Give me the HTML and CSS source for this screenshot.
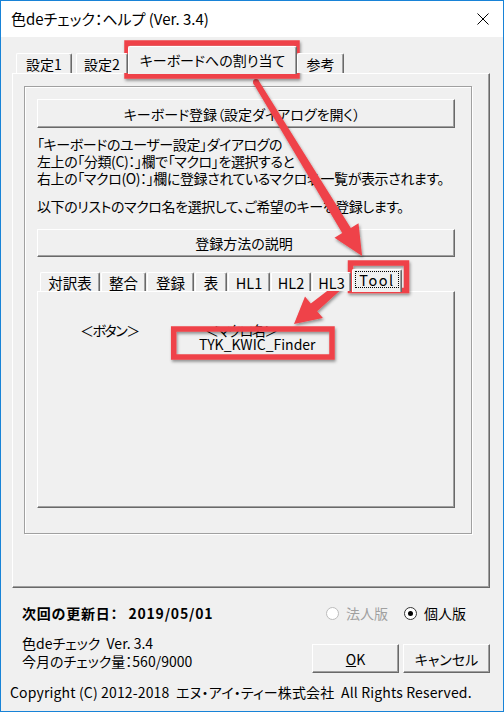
FILE: index.html
```html
<!DOCTYPE html>
<html lang="ja">
<head>
  <meta charset="UTF-8" />
  <title>色deチェック：ヘルプ</title>
  <link rel="stylesheet" href="styles.css">
</head>
<body>
  <div class="window">
    <div class="titlebar">
      <span class="title">色deチェック：ヘルプ (Ver. 3.4)</span>
      <svg class="close" width="12" height="12" viewBox="0 0 12 12">
        <path d="M0.5 0.5 L11.5 11.5 M11.5 0.5 L0.5 11.5" stroke="#000" stroke-width="1" fill="none"/>
      </svg>
    </div>

    <div class="client">
      <div class="tabs outer-tabs">
        <div class="tab">設定1</div>
        <div class="tab">設定2</div>
        <div class="tab active">キーボードへの割り当て</div>
        <div class="tab">参考</div>
      </div>

      <div class="tab-panel main-panel">
        <div class="frame">
          <div class="btn wide">キーボード登録（設定ダイアログを開く）</div>
          <div class="note">
            <div>「キーボードのユーザー設定」ダイアログの</div>
            <div>左上の「分類(C)：」欄で「マクロ」を選択すると</div>
            <div>右上の「マクロ(O)：」欄に登録されているマクロ名一覧が表示されます。</div>
          </div>
          <div class="note second">以下のリストのマクロ名を選択して、ご希望のキーを登録します。</div>
          <div class="btn wide short">登録方法の説明</div>

          <div class="tabs inner-tabs">
            <div class="tab">対訳表</div>
            <div class="tab">整合</div>
            <div class="tab">登録</div>
            <div class="tab">表</div>
            <div class="tab">HL1</div>
            <div class="tab">HL2</div>
            <div class="tab">HL3</div>
            <div class="tab active"><span class="focus">Tool</span></div>
          </div>
          <div class="tab-panel inner-panel">
            <div class="macro-list">
              <span class="macro-head">＜ボタン＞</span>
              <span class="macro-head">＜マクロ名＞</span>
              <span></span>
              <span class="macro-name">TYK_KWIC_Finder</span>
            </div>
          </div>
        </div>
      </div>

      <div class="footer-top">
        <div class="update"><span>次回の更新日：</span><span class="date">2019/05/01</span></div>
        <div class="radios">
          <label class="radio-item disabled"><span class="radio"></span>法人版</label>
          <label class="radio-item"><span class="radio checked"></span>個人版</label>
        </div>
      </div>

      <div class="footer-mid">
        <div class="info">
          <div>色deチェック&nbsp; Ver. 3.4</div>
          <div>今月のチェック量：560/9000</div>
        </div>
        <div class="actions">
          <div class="btn action"><u>O</u>K</div>
          <div class="btn action">キャンセル</div>
        </div>
      </div>

      <div class="copyright">Copyright (C) 2012-2018&nbsp; エヌ・アイ・ティー株式会社&nbsp; All Rights Reserved.</div>
    </div>
  </div>

  <!-- annotations drawn over the dialog -->
  <svg class="annot" width="504" height="712" viewBox="0 0 504 712">
    <defs>
      <filter id="shadow" x="-10%" y="-10%" width="130%" height="130%">
        <feDropShadow dx="1" dy="2" stdDeviation="1.5" flood-color="#000" flood-opacity="0.4"/>
      </filter>
    </defs>
    <g filter="url(#shadow)" fill="#ef4349">
      <polygon points="258.6,80.4 350.8,227.9 358.5,223.2 362.1,256.1 334.5,237.8 342.2,233.1 253.4,83.6"/>
      <circle cx="256" cy="82" r="3"/>
      <polygon points="339.8,281.3 310.8,303.5 305,296.6 294,324 322.9,318.1 317.2,311.2 344.2,286.7"/>
      <circle cx="342" cy="284" r="3.5"/>
    </g>
    <g filter="url(#shadow)" fill="none" stroke="#ef4349" stroke-width="5.5">
      <rect x="127" y="43" width="170" height="33"/>
      <rect x="350.5" y="263" width="56" height="27.5"/>
      <rect x="173.7" y="329" width="158.3" height="28"/>
    </g>
  </svg>
</body>
</html>
```

FILE: styles.css
```css
* {
  box-sizing: border-box;
}
html, body {
  margin: 0;
  padding: 0;
}
body {
  width: 504px;
  height: 712px;
  position: relative;
  overflow: hidden;
  font-family: "Noto Sans CJK JP", "Noto Sans", sans-serif;
  font-size: 14px;
  font-feature-settings: "palt";
  color: #000;
  background: #f0f0f0;
}
.window {
  height: 712px;
  border: 1px solid #1883d7;
  background: #f0f0f0;
}
.titlebar {
  height: 36px;
  background: #fff;
  display: flex;
  align-items: center;
  justify-content: space-between;
  padding: 0 14px 0 10px;
}
.title {
  font-size: 15px;
  line-height: 20px;
}
.close {
  display: block;
}
.client {
  padding: 9px 13px 0 11px;
}

/* tabs */
.tabs {
  display: flex;
  align-items: flex-end;
  position: relative;
  z-index: 1;
}
.tab {
  display: flex;
  align-items: center;
  justify-content: center;
  background: #f0f0f0;
  border-top: 1px solid #fff;
  border-left: 1px solid #fff;
  border-right: 1px solid #696969;
  box-shadow: inset -1px 0 0 #a0a0a0;
  border-radius: 2px 2px 0 0;
  white-space: nowrap;
}
.outer-tabs {
  margin-left: 4px;
}
.outer-tabs .tab {
  height: 20px;
}
.outer-tabs .tab:nth-child(1) { width: 56px; margin-right: 4px; }
.outer-tabs .tab:nth-child(2) { width: 52px; }
.outer-tabs .tab:nth-child(3) { width: 169px; }
.outer-tabs .tab:nth-child(4) { width: 47px; }
.outer-tabs .tab.active {
  height: 28px;
  margin-bottom: -1px;
  padding-bottom: 2px;
}
.inner-tabs {
  margin: 12px 0 0 3px;
}
.inner-tabs .tab {
  height: 19px;
  font-size: 14.5px;
  margin-right: 1px;
}
.inner-tabs .tab:nth-child(1) { width: 60px; }
.inner-tabs .tab:nth-child(2) { width: 45px; }
.inner-tabs .tab:nth-child(3) { width: 47px; }
.inner-tabs .tab:nth-child(4) { width: 32px; }
.inner-tabs .tab:nth-child(5) { width: 42px; }
.inner-tabs .tab:nth-child(6) { width: 40px; }
.inner-tabs .tab:nth-child(7) { width: 39px; }
.inner-tabs .tab.active {
  width: 50px;
  height: 23px;
  margin-bottom: -1px;
  padding-bottom: 3px;
}
.focus {
  border: 1px dotted #000;
  padding: 0 3px;
  line-height: 15px;
  letter-spacing: 1.5px;
}

.tab-panel {
  background: #f0f0f0;
  border: 1px solid;
  border-color: #fff #696969 #696969 #fff;
  box-shadow: inset -1px -1px 0 #a0a0a0;
}
.main-panel {
  width: 478px;
  height: 515px;
  padding: 12px 0 0 11px;
}
.frame {
  width: 448px;
  height: 448px;
  border: 1px solid #a0a0a0;
  box-shadow: 1px 1px 0 #fff, inset 1px 1px 0 #fff;
  padding: 12px 0 0 12px;
}

/* buttons */
.btn {
  display: flex;
  align-items: center;
  justify-content: center;
  background: #f0f0f0;
  border: 1px solid;
  border-color: #fff #696969 #696969 #fff;
  box-shadow: inset -1px -1px 0 #a0a0a0;
  white-space: nowrap;
}
.btn.wide {
  width: 418px;
  height: 29px;
  padding-right: 8px;
}
.btn.short {
  height: 28px;
  margin-top: 14px;
  padding-right: 4px;
}

.note {
  margin-top: 8px;
  line-height: 17px;
  letter-spacing: -0.4px;
  white-space: nowrap;
}
.note.second {
  margin-top: 11px;
}

.inner-panel {
  width: 418px;
  height: 217px;
  padding: 30px 0 0 42px;
}
.macro-list {
  display: grid;
  grid-template-columns: 125px auto;
  line-height: 17px;
}
.macro-head {
  letter-spacing: -1.5px;
}
.macro-name {
  margin: -3px 0 0 -6px;
}

/* footer */
.footer-top {
  display: flex;
  justify-content: space-between;
  align-items: center;
  margin-top: 16px;
  padding: 0 24px 0 10px;
  line-height: 18px;
}
.update {
  font-weight: bold;
  letter-spacing: 0.8px;
}
.date {
  margin-left: 10px;
}
.radios {
  display: flex;
  gap: 16px;
}
.radio-item {
  display: flex;
  align-items: center;
  gap: 7px;
}
.radio-item.disabled {
  color: #a0a0a0;
}
.radio {
  width: 13px;
  height: 13px;
  border-radius: 50%;
  border: 1px solid #333;
  background: #fff;
  position: relative;
}
.radio-item.disabled .radio {
  border-color: #bcbcbc;
}
.radio.checked::after {
  content: "";
  position: absolute;
  left: 3px;
  top: 3px;
  width: 5px;
  height: 5px;
  border-radius: 50%;
  background: #000;
}
.footer-mid {
  display: flex;
  justify-content: space-between;
  align-items: flex-start;
  margin-top: 12px;
}
.info {
  padding-left: 10px;
  line-height: 18px;
}
.actions {
  display: flex;
  gap: 4px;
  margin-top: 10px;
}
.btn.action {
  width: 87px;
  height: 29px;
}
.copyright {
  margin: 10px 0 0 -2px;
  line-height: 18px;
  letter-spacing: 0.15px;
  white-space: nowrap;
}

.annot {
  position: absolute;
  left: 0;
  top: 0;
  pointer-events: none;
}
```
